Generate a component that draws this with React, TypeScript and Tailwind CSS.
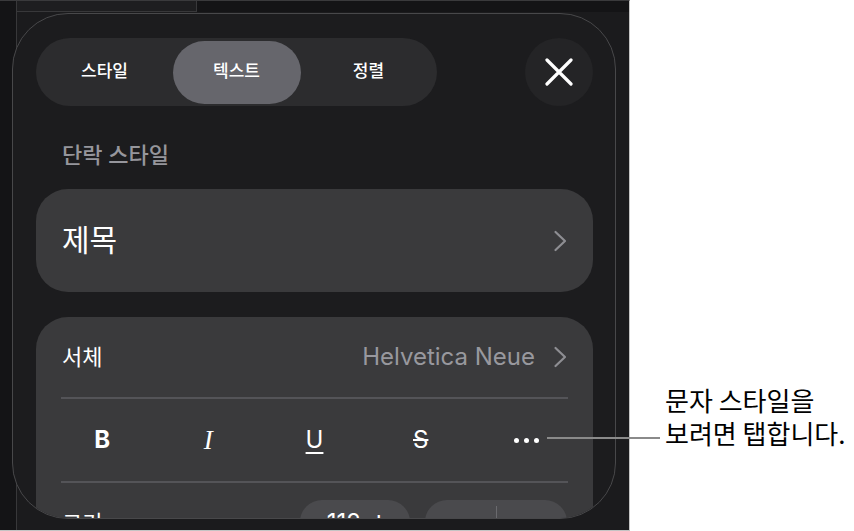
import React from "react";

const FONT = "font-['Inter','Noto_Sans_CJK_KR',sans-serif]";

function Chevron() {
  return (
    <svg width="14" height="22" viewBox="0 0 14 22" fill="none">
      <polyline
        points="2.5,2 12,11 2.5,20"
        stroke="#8e8e93"
        strokeWidth="2.2"
        strokeLinecap="round"
        strokeLinejoin="round"
      />
    </svg>
  );
}

function CloseIcon() {
  return (
    <svg width="28" height="28" viewBox="0 0 28 28" fill="none">
      <path d="M2 2 L26 26 M26 2 L2 26" stroke="#ffffff" strokeWidth="3.2" strokeLinecap="round" />
    </svg>
  );
}

function Segmented() {
  const items = ["스타일", "텍스트", "정렬"];
  return (
    <div className="w-[401px] h-[68px] rounded-full bg-[#2c2c2e] p-[2.5px] grid grid-cols-3">
      {items.map((label, i) => (
        <div key={label} className="flex items-center justify-center">
          <div
            className={
              "h-full flex items-center justify-center rounded-full text-[17px] font-medium text-white " +
              (i === 1 ? "w-[128px] bg-[#66666c]" : "w-full")
            }
          >
            {label}
          </div>
        </div>
      ))}
    </div>
  );
}

function Divider() {
  return <div className="mx-[25px] h-[2px] bg-[#545458]" />;
}

export default function App() {
  return (
    <div className={`relative w-[854px] h-[531px] bg-white flex ${FONT}`}>
      <div className="relative w-[630px] h-[531px] shrink-0 bg-[#141416] border-t border-t-[#3a3a3c] border-r border-r-[#c4c4c4] border-b border-b-[#c4c4c4] overflow-hidden">
        {/* document chrome behind the popover */}
        <div className="absolute left-[16px] top-0 bottom-0 w-px bg-[#38383a]" />
        <div className="absolute left-[17px] top-0 w-[180px] h-[11px] bg-[#1e1e20] border-r border-b border-[#38383a]" />
        <div className="absolute left-[17px] right-0 top-[11px] bottom-0 bg-[#1b1b1d]" />

        {/* format popover */}
        <div className="absolute left-[12px] top-[12px] w-[604px] h-[506px] rounded-[56px] border border-[#48484a] bg-[#1c1c1e] overflow-hidden">
          <div className="flex flex-col pt-[24px] pl-[23px] pr-[22px]">
            <div className="flex items-center justify-between">
              <Segmented />
              <div className="w-[68px] h-[68px] rounded-full bg-[#242426] flex items-center justify-center">
                <CloseIcon />
              </div>
            </div>

            <div className="mt-[33px] pl-[26px] text-[22px] leading-[32px] font-medium text-[#96969c]">
              단락 스타일
            </div>

            <div className="mt-[18px] h-[103px] rounded-[32px] bg-[#3a3a3c] flex items-center justify-between pl-[26px] pr-[26px]">
              <span className="text-[30px] font-normal text-white">제목</span>
              <Chevron />
            </div>

            <div className="mt-[25px] rounded-[32px] bg-[#3a3a3c] flex flex-col">
              <div className="h-[80px] flex items-center justify-between pl-[26px] pr-[26px]">
                <span className="text-[22px] text-white">서체</span>
                <div className="flex items-center gap-[18px]">
                  <span className="text-[24px] text-[#98989e]">Helvetica Neue</span>
                  <Chevron />
                </div>
              </div>
              <Divider />
              <div className="h-[82px] flex items-center px-[13px] text-white">
                <div className="flex-1 flex justify-center">
                  <span className="text-[24px] font-bold font-['Inter',sans-serif]">B</span>
                </div>
                <div className="flex-1 flex justify-center">
                  <span className="text-[27px] italic font-['Liberation_Serif',serif]">I</span>
                </div>
                <div className="flex-1 flex justify-center">
                  <span className="text-[24px] underline decoration-[2px] underline-offset-[4px]">U</span>
                </div>
                <div className="flex-1 flex justify-center">
                  <span className="text-[24px] line-through decoration-[2px] px-[2px]">S</span>
                </div>
                <div className="flex-1 flex justify-center items-center gap-[5px]">
                  <span className="w-[5px] h-[5px] rounded-full bg-white" />
                  <span className="w-[5px] h-[5px] rounded-full bg-white" />
                  <span className="w-[5px] h-[5px] rounded-full bg-white" />
                </div>
              </div>
              <Divider />
              <div className="pt-[17px] flex items-start pl-[26px] pr-[26px]">
                <span className="flex-1 h-[46px] flex items-center text-[22px] text-white">크기</span>
                <div className="w-[110px] h-[46px] rounded-[22px] bg-[#4a4a4d] flex items-center justify-center text-[24px] text-white">
                  112pt
                </div>
                <div className="ml-[15px] w-[142px] h-[46px] rounded-[22px] bg-[#4a4a4d] flex">
                  <div className="flex-1 flex items-center justify-center text-[26px] text-white">−</div>
                  <div className="w-px mt-[6px] h-[36px] bg-[#6a6a6e]" />
                  <div className="flex-1 flex items-center justify-center text-[26px] text-white">+</div>
                </div>
              </div>
            </div>
          </div>
        </div>
      </div>

      {/* callout */}
      <div className="pl-[35px] pt-[383px] text-[26px] leading-[33px] text-black font-['Noto_Sans_CJK_KR',sans-serif]">
        <div>문자 스타일을</div>
        <div>보려면 탭합니다.</div>
      </div>

      <div className="absolute left-[547px] top-[437px] w-[113px] h-[2px] bg-[#8a8a8a]" />
    </div>
  );
}
